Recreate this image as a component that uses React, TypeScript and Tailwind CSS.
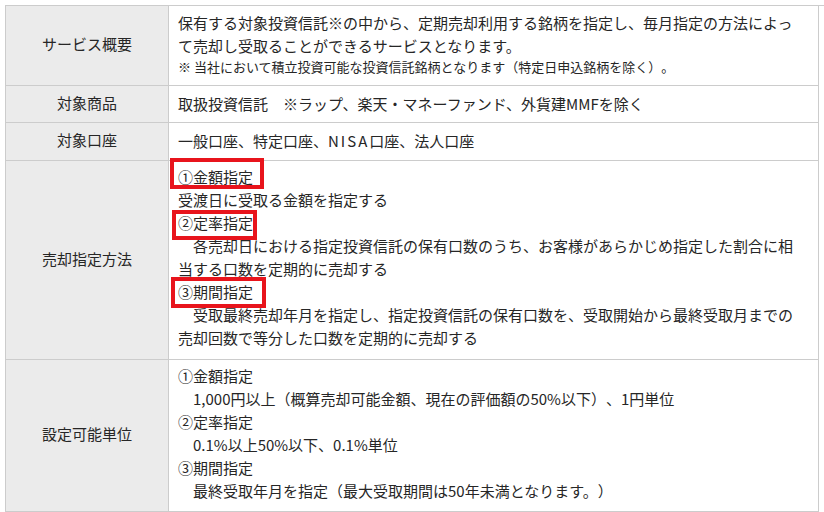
import React from 'react';

type Box = { top: number; left: number; right: number; bottom: number };

// red annotation frame drawn over a line of text
const Marked: React.FC<{ box: Box; children: React.ReactNode }> = ({ box, children }) => (
  <span className="relative inline-block align-top">
    {children}
    <span
      className="absolute border-4 border-[#e8141c] pointer-events-none"
      style={{ top: box.top, left: box.left, right: box.right, bottom: box.bottom }}
    />
  </span>
);

const Label: React.FC<{ children: React.ReactNode }> = ({ children }) => (
  <div className="flex items-center justify-center pb-[4px] bg-[#ebebeb] border-r border-b border-[#cccccc] text-[15px] leading-[23px]">
    {children}
  </div>
);

const Cell: React.FC<{ className?: string; children: React.ReactNode }> = ({ className = 'pt-[4px]', children }) => (
  <div className={`border-r border-b border-[#cccccc] pl-[9px] pr-[12px] text-[15px] leading-[23px] ${className}`}>
    {children}
  </div>
);

const App: React.FC = () => {
  return (
    <div
      className="bg-white w-[824px] h-[512px] overflow-hidden pt-[5px] pl-[5px] text-[#262626] [text-spacing-trim:space-all]"
      style={{ fontFamily: '"Noto Sans CJK JP", "Noto Sans", sans-serif' }}
    >
      <div className="grid grid-cols-[163px_650px] grid-rows-[80px_37px_38px_199px_152px] border-t border-l border-[#cccccc]">
        <Label>サービス概要</Label>
        <Cell className="pt-[5px]">
          <p>保有する対象投資信託※の中から、定期売却利用する銘柄を指定し、毎月指定の方法によっ</p>
          <p>て売却し受取ることができるサービスとなります。</p>
          <p className="text-[13px] leading-[19px]">※ 当社において積立投資可能な投資信託銘柄となります（特定日申込銘柄を除く）。</p>
        </Cell>

        <Label>対象商品</Label>
        <Cell className="pt-[6px]">取扱投資信託　※ラップ、楽天・マネーファンド、外貨建MMFを除く</Cell>

        <Label>対象口座</Label>
        <Cell className="pt-[6px]">
          一般口座、特定口座、<span className="tracking-[2px]">NISA</span>口座、法人口座
        </Cell>

        <Label>売却指定方法</Label>
        <Cell>
          <p>
            <Marked box={{ top: -7, left: -8, right: -11, bottom: -1 }}>①金額指定</Marked>
          </p>
          <p>受渡日に受取る金額を指定する</p>
          <p>
            <Marked box={{ top: -1, left: -6, right: -4, bottom: -6 }}>②定率指定</Marked>
          </p>
          <p>　各売却日における指定投資信託の保有口数のうち、お客様があらかじめ指定した割合に相</p>
          <p>当する口数を定期的に売却する</p>
          <p>
            <Marked box={{ top: -3, left: -7, right: -13, bottom: -5 }}>③期間指定</Marked>
          </p>
          <p>　受取最終売却年月を指定し、指定投資信託の保有口数を、受取開始から最終受取月までの</p>
          <p>売却回数で等分した口数を定期的に売却する</p>
        </Cell>

        <Label>設定可能単位</Label>
        <Cell>
          <p>①金額指定</p>
          <p>　1,000円以上（概算売却可能金額、現在の評価額の50%以下）、1円単位</p>
          <p>②定率指定</p>
          <p>　0.1%以上50%以下、0.1%単位</p>
          <p>③期間指定</p>
          <p>　最終受取年月を指定（最大受取期間は50年未満となります。）</p>
        </Cell>
      </div>
    </div>
  );
};

export default App;
